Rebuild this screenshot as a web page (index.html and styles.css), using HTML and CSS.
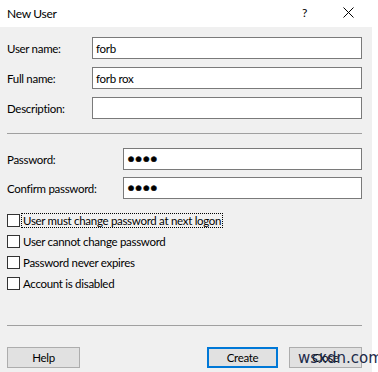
FILE: index.html
```html
<!DOCTYPE html>
<html>
<head>
<meta charset="utf-8">
<link rel="stylesheet" href="styles.css">
</head>
<body>
<div class="window">
  <div class="titlebar">
    <span class="title">New User</span>
    <span class="help-q">?</span>
    <svg class="close-x" width="11" height="11" viewBox="0 0 11 11"><path d="M0.5 0.5 L10.5 10.5 M10.5 0.5 L0.5 10.5" stroke="#000" stroke-width="1" fill="none"/></svg>
  </div>
  <div class="body">
    <div class="group">
      <div class="row"><span class="label">User name:</span><div class="input wide">forb</div></div>
      <div class="row"><span class="label">Full name:</span><div class="input wide">forb rox</div></div>
      <div class="row"><span class="label">Description:</span><div class="input wide"></div></div>
    </div>
    <div class="sep sep-top"></div>
    <div class="group group-pw">
      <div class="row"><span class="label">Password:</span><div class="input pw"><span class="dots">●●●●</span></div></div>
      <div class="row"><span class="label">Confirm password:</span><div class="input pw"><span class="dots">●●●●</span></div></div>
    </div>
    <div class="checks">
      <div class="check"><span class="box"></span><span class="clabel focus">User must change password at next logon</span></div>
      <div class="check"><span class="box"></span><span class="clabel">User cannot change password</span></div>
      <div class="check"><span class="box"></span><span class="clabel">Password never expires</span></div>
      <div class="check"><span class="box"></span><span class="clabel">Account is disabled</span></div>
    </div>
    <div class="sep sep-bottom"></div>
    <div class="buttons">
      <div class="btn">Help</div>
      <div class="spacer"></div>
      <div class="btn default">Create</div>
      <div class="btn">Close</div>
    </div>
  </div>
  <div class="watermark">wsxdn.com</div>
</div>
</body>
</html>
```
FILE: styles.css
```css
html, body {
  margin: 0;
  padding: 0;
  background: #ffffff;
}
body {
  font-family: Lato, "Noto Sans", sans-serif;
  font-size: 11.5px;
  letter-spacing: -0.3px;
  color: #000;
}
.window {
  position: relative;
  width: 378px;
  height: 372px;
  overflow: hidden;
}
.titlebar {
  height: 27px;
  display: flex;
  align-items: center;
  background: #fff;
  position: relative;
}
.title {
  margin-left: 7px;
  font-size: 12px;
}
.help-q {
  position: absolute;
  left: 302px;
  top: 5px;
  font-size: 12px;
}
.close-x {
  position: absolute;
  left: 343px;
  top: 7px;
}
.body {
  width: 372px;
  height: 345px;
  background: #f0f0f0;
  box-sizing: border-box;
  padding: 10px 10px 0 7px;
  display: flex;
  flex-direction: column;
}
.group {
  display: flex;
  flex-direction: column;
  gap: 8px;
}
.group-pw {
  gap: 7px;
  margin-top: 14px;
}
.row {
  display: flex;
  align-items: center;
  height: 22px;
}
.label {
  width: 85px;
  flex: none;
}
.group-pw .label {
  width: 116px;
}
.input {
  height: 22px;
  box-sizing: border-box;
  border: 1px solid #7a7a7a;
  background: #fff;
  padding: 0 3px;
  display: flex;
  align-items: center;
  flex: 1;
}
.dots {
  font-family: "DejaVu Sans", sans-serif;
  font-size: 7px;
  letter-spacing: 1.5px;
  margin-left: 1px;
  -webkit-text-stroke: 0.5px #000;
}
.sep {
  height: 1px;
  background: #a0a0a0;
  margin-right: 0;
}
.sep-top {
  margin-top: 14px;
}
.checks {
  margin-top: 11px;
  display: flex;
  flex-direction: column;
}
.check {
  height: 21px;
  display: flex;
  align-items: center;
}
.box {
  width: 13px;
  height: 13px;
  box-sizing: border-box;
  border: 1px solid #333;
  background: #fff;
  flex: none;
}
.clabel {
  margin-left: 1px;
  padding: 0 1px;
  border: 1px solid transparent;
}
.clabel.focus {
  border: 1px dotted #000;
}
.sep-bottom {
  margin-top: 31px;
}
.buttons {
  margin-top: 21px;
  display: flex;
  gap: 11px;
}
.spacer {
  flex: 1;
}
.btn {
  width: 73px;
  height: 21px;
  box-sizing: border-box;
  border: 1px solid #adadad;
  background: #e1e1e1;
  display: flex;
  align-items: center;
  justify-content: center;
}
.btn.default {
  border: 2px solid #0078d7;
  width: 71px;
}
.watermark {
  position: absolute;
  left: 298px;
  top: 349px;
  font-family: "DejaVu Sans", sans-serif;
  font-size: 15px;
  letter-spacing: 0;
  color: #1c2a4a;
}
```
